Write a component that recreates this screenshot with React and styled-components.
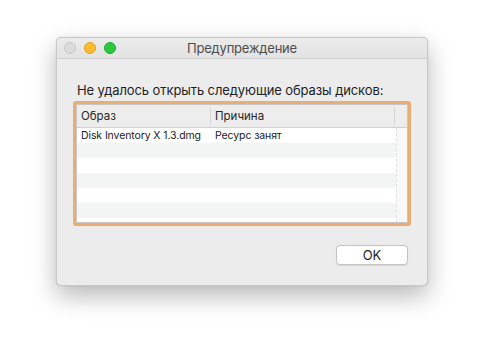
import React from "react";
import styled, { createGlobalStyle } from "styled-components";

const GlobalStyle = createGlobalStyle`
  html, body {
    margin: 0;
    padding: 0;
    background: #ffffff;
  }
  body {
    font-family: 'Inter', 'Liberation Sans', sans-serif;
    -webkit-font-smoothing: antialiased;
  }
`;

const Page = styled.div`
  width: 484px;
  height: 359px;
  display: flex;
  justify-content: center;
  align-items: flex-start;
  padding-top: 37px;
  box-sizing: border-box;
`;

const Window = styled.div`
  width: 372px;
  height: 249px;
  background: #ececec;
  border-radius: 5px;
  border: 1px solid #c9c9c9;
  box-sizing: border-box;
  box-shadow: 0 10px 24px rgba(0, 0, 0, 0.28), 0 0 1px rgba(0, 0, 0, 0.3);
  display: flex;
  flex-direction: column;
  overflow: hidden;
`;

const TitleBar = styled.div`
  height: 21px;
  flex: none;
  display: flex;
  align-items: center;
  position: relative;
  background: linear-gradient(#ebebeb, #e3e3e3);
  border-bottom: 1px solid #d1d1d1;
  box-sizing: border-box;
  padding-left: 7px;
  gap: 8px;
`;

const Light = styled.span`
  width: 12px;
  height: 12px;
  border-radius: 50%;
  box-sizing: border-box;
  background: ${(p) => p.$fill};
  border: 1px solid ${(p) => p.$edge};
`;

const Title = styled.div`
  position: absolute;
  left: 0;
  right: 0;
  top: 0;
  bottom: 0;
  display: flex;
  align-items: center;
  justify-content: center;
  font-size: 13px;
  color: #4d4d4d;
  letter-spacing: -0.2px;
  pointer-events: none;
`;

const Body = styled.div`
  flex: 1;
  display: flex;
  flex-direction: column;
  padding: 23px 19px 20px 19px;
`;

const Message = styled.div`
  font-size: 13px;
  color: #1e1e1e;
  line-height: 16px;
  letter-spacing: -0.1px;
  padding-left: 1px;
  margin-bottom: 6px;
`;

const Table = styled.div`
  height: 119px;
  flex: none;
  border: 1px solid #c6c6c6;
  box-shadow: 0 0 0 3px #eaae72;
  border-radius: 1px;
  background: #ffffff;
  display: flex;
  flex-direction: column;
  overflow: hidden;
  box-sizing: border-box;
`;

const HeaderRow = styled.div`
  height: 23px;
  flex: none;
  display: grid;
  grid-template-columns: 134px 184px 1fr;
  background: #ededed;
  border-bottom: 1px solid #d0d0d0;
  box-sizing: border-box;
`;

const HeaderCell = styled.div`
  display: flex;
  align-items: center;
  padding-left: 4px;
  font-size: 11.5px;
  color: #262626;
  border-right: 1px solid ${(p) => (p.$last ? "transparent" : "#d5d5d5")};
  margin: 2px 0;
`;

const Rows = styled.div`
  flex: 1;
  display: grid;
  grid-template-columns: 1fr 11px;
  overflow: hidden;
`;

const RowList = styled.div`
  display: flex;
  flex-direction: column;
`;

const Row = styled.div`
  height: 15px;
  flex: none;
  display: grid;
  grid-template-columns: 134px 1fr;
  background: ${(p) => (p.$alt ? "#f3f4f4" : "#ffffff")};
  font-size: 10.5px;
  letter-spacing: -0.1px;
  color: #1a1a1a;
  align-items: center;
`;

const Cell = styled.div`
  padding-left: 4px;
  white-space: nowrap;
`;

const Gutter = styled.div`
  background: #f8f8f8;
  border-left: 1px dashed #e2e2e2;
`;

const Footer = styled.div`
  margin-top: auto;
  display: flex;
  justify-content: flex-end;
`;

const Button = styled.button`
  width: 72px;
  height: 20px;
  background: #ffffff;
  border: 1px solid #c3c3c3;
  border-radius: 4px;
  box-shadow: 0 0.5px 1px rgba(0, 0, 0, 0.08);
  font-family: inherit;
  font-size: 13px;
  color: #1e1e1e;
  padding: 0;
  display: flex;
  align-items: center;
  justify-content: center;
`;

const rows = [
  ["Disk Inventory X 1.3.dmg", "Ресурс занят"],
  ["", ""],
  ["", ""],
  ["", ""],
  ["", ""],
  ["", ""],
  ["", ""],
];

export default function App() {
  return (
    <>
      <GlobalStyle />
      <Page>
        <Window>
          <TitleBar>
            <Light $fill="#dcdcdc" $edge="#c7c7c7" />
            <Light $fill="#fdbc30" $edge="#e0a123" />
            <Light $fill="#2bc840" $edge="#1faa32" />
            <Title>Предупреждение</Title>
          </TitleBar>
          <Body>
            <Message>Не удалось открыть следующие образы дисков:</Message>
            <Table>
              <HeaderRow>
                <HeaderCell>Образ</HeaderCell>
                <HeaderCell>Причина</HeaderCell>
                <HeaderCell $last />
              </HeaderRow>
              <Rows>
                <RowList>
                  {rows.map((r, i) => (
                    <Row key={i} $alt={i % 2 === 1}>
                      <Cell>{r[0]}</Cell>
                      <Cell>{r[1]}</Cell>
                    </Row>
                  ))}
                </RowList>
                <Gutter />
              </Rows>
            </Table>
            <Footer>
              <Button>OK</Button>
            </Footer>
          </Body>
        </Window>
      </Page>
    </>
  );
}
